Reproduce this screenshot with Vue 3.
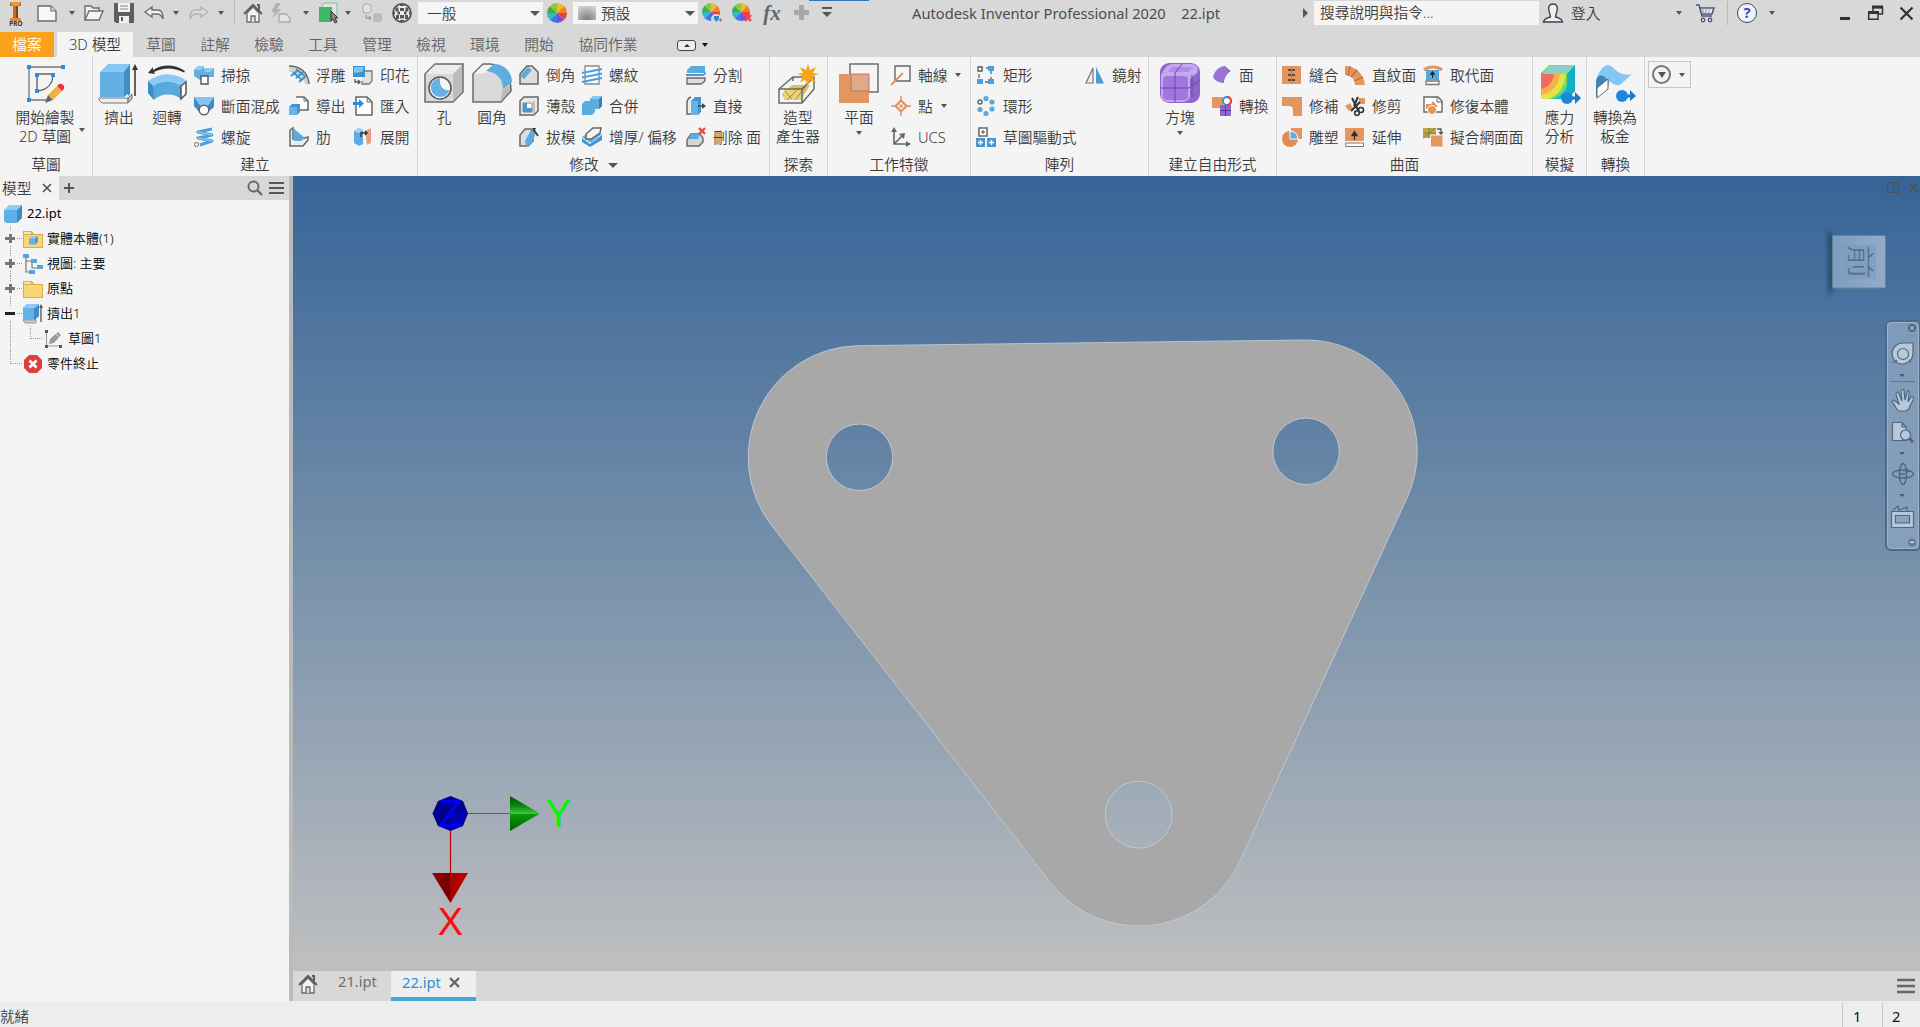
<script setup>
const G = '#6b6b6b'
const wheel = (cx, cy, r) => {
  const colors = ['#f7b733', '#f58220', '#ee3e3a', '#7a4be0', '#3f7be8', '#35b9c9', '#3fae49', '#8cc63f']
  return colors.map((c, i) => {
    const a = (i / 8) * Math.PI * 2 - Math.PI / 2
    const b = a + Math.PI / 4
    const p = (t) => `${(cx + r * Math.cos(t)).toFixed(2)} ${(cy + r * Math.sin(t)).toFixed(2)}`
    return `<path d="M${cx} ${cy}L${p(a)}A${r} ${r} 0 0 1 ${p(b)}Z" fill="${c}"/>`
  }).join('')
}
const cross = (x, y) => `<path d="M${x} ${y}l6 6m0-6l-6 6" stroke="#f04444" stroke-width="2.4" fill="none"/>`
const cube = `<path d="M1 6L6 1H19L14 6Z" fill="#8ecbf7"/><path d="M14 6L19 1V14L14 19Z" fill="#3f8cc4"/><path d="M1 6H14V19H3L1 17Z" fill="#5fb0e6"/>`

const icons = {
  logo: `<path d="M4 0H15V4H12V16H15V19H4V16H7V4H4Z" fill="#c96a1b"/><path d="M4 0H15L12 4H7Z" fill="#f0993c"/><path d="M10 4H12V16H15V19H10Z" fill="#8a4210"/><path d="M4 16H15V19H4Z" fill="#e38a31"/>`,
  new: `<path d="M1 3H14L19 8V18H1Z" fill="#f8f8f8" stroke="${G}" stroke-width="1.4"/><path d="M14 3V8H19" fill="#ddd" stroke="${G}" stroke-width="1.2"/>`,
  open: `<path d="M1 17V3H7L9 5H15V8" fill="#eee" stroke="${G}" stroke-width="1.4"/><path d="M1 17L5 8H19L15 17Z" fill="#f4f4f4" stroke="${G}" stroke-width="1.4"/>`,
  save: `<path d="M0 0H20V20H2L0 18Z" fill="#5e5e5e"/><path d="M4 0H16V9H4Z" fill="#f2f2f2"/><path d="M6 3H14M6 6H14" stroke="#888" stroke-width="1"/><path d="M5 13H15V20H5Z" fill="#eee"/><path d="M7 14H9V18H7Z" fill="#5e5e5e"/>`,
  undo: `<path d="M1 9L8 4V7H14C18 7 19 10 19 16C17 12 16 11 13 11H8V14Z" fill="#f1f1f1" stroke="${G}" stroke-width="1.3"/>`,
  redo: `<path d="M19 9L12 4V7H6C2 7 1 10 1 16C3 12 4 11 7 11H12V14Z" fill="#dedede" stroke="#b2b2b2" stroke-width="1.3"/>`,
  home: `<path d="M4 10V19H16V10L10 4Z" fill="#f4f4f4" stroke="${G}" stroke-width="1.3"/><path d="M1 11L10 2L19 11" fill="none" stroke="#5d5d5d" stroke-width="2"/><path d="M14 2H16V7" fill="none" stroke="#5d5d5d" stroke-width="2"/><path d="M8 19V13H12V19" fill="#ddd" stroke="${G}" stroke-width="1.3"/>`,
  flash: `<path d="M5 0L0 9H4L1 16L10 6H6L10 0Z" fill="#b0b0b0"/><path d="M8 11H15L19 15V19H8Z" fill="#e3e3e3" stroke="#aaa" stroke-width="1.3"/>`,
  select: `<path d="M4 2L6 0H19V14L17 16H4Z" fill="#e0e0e0" stroke="#79c794" stroke-width="1"/><path d="M1 4H14V19H1Z" fill="#3fb76a"/><path d="M13 8V18L15 16L17 20L19 19L17 15H20Z" fill="#888" stroke="#333" stroke-width="1"/>`,
  body: `<rect x="1" y="1" width="8" height="9" rx="3" fill="#e2e2e2" stroke="#a9a9a9"/><rect x="11" y="10" width="9" height="9" rx="3" fill="#bcbcbc"/><path d="M4 12V15H9M7 13l2 2-2 2" fill="none" stroke="#8a8a8a"/>`,
  ball: `<circle cx="10" cy="10" r="9" fill="#eee" stroke="#555" stroke-width="1.800"/><path d="M8 5h4v3h-4zM3.500 4.500h3v4h-3zM13.500 4.500h3v4h-3zM8 12h4v3.500H8zM4 12h3v4H4zM13 12h3v4h-3zM5.500 8.500h2.500v3H5.500zM12 8.500h2.500v3H12zM8 1h4v2H8zM8 17h4v2H8zM1 8.500h2v3H1zM17 8.500h2v3h-2z" fill="#555"/>`,
  wheel: wheel(10, 10, 10),
  wheelAdd: wheel(9, 9, 9) + `<circle cx="14" cy="16" r="5" fill="#d8d8d8"/><path d="M12 13H17V16L14.5 19L12 16Z" fill="#2d86d0"/><path d="M17 17H20M18.500 15.500V18.500" stroke="#777"/>`,
  wheelDel: wheel(9, 9, 9) + cross(13, 12),
  plus: `<path d="M7 2h5v5h5v5h-5v5H7v-5H2V7h5z" fill="#a7a7a7"/>`,
  custom: `<path d="M5 5H15" stroke="#555" stroke-width="2"/><path d="M5 9H15L10 14Z" fill="#555"/>`,
  user: `<path d="M10 1C14 1 15 4 14 8C13.500 11 12.500 12 12.500 14C17 15 19 16 19.500 19H.5C1 16 3 15 7.500 14C7.500 12 6.500 11 6 8C5 4 6 1 10 1Z" fill="#eef0f4" stroke="#3b4252" stroke-width="1.4"/>`,
  cart: `<path d="M1 2H4L7 13H17M5 5H19L17 11H6.500" fill="#e8ecf6" stroke="#4c5577" stroke-width="1.5"/><path d="M8 5V11M11 5V11M14 5V11" stroke="#8d95b5"/><circle cx="8" cy="17" r="1.700" fill="#fff" stroke="#4c5577" stroke-width="1.400"/><circle cx="15" cy="17" r="1.700" fill="#fff" stroke="#4c5577" stroke-width="1.400"/>`,
  // 3D model ribbon, large
  sketch: `<path d="M4 4H36M4 4V37H25" stroke="#777" stroke-width="1.300" fill="none"/><path d="M12 11H28M12 11V28M28 11C28 20 23 27 12 28" fill="none" stroke="#666" stroke-width="1.400"/><g fill="#2f8fdd"><path d="M2 2h4v4H2zM36 2h4v4h-4zM2 35h4v4H2zM11 10h3v4h-4v-4zM26 10h4v4h-4zM10 26h4v4h-4z"/></g><path d="M23 32L32 23L37 28L28 37Z" fill="#f0b040"/><path d="M32 23L34 21C38 20 41 24 38 27L37 28Z" fill="#e8323c"/><path d="M23 32L28 37L20 40Z" fill="#666"/>`,
  extrude: `<path d="M0 35H29V40H3L0 37Z" fill="#eee" stroke="#777"/><path d="M29 35L33 31V36L29 40Z" fill="#bbb" stroke="#777"/><path d="M1 9L9 1H31L29 9Z" fill="#88c7f5"/><path d="M29 9L31 1V31L29 33Z" fill="#3c86bd"/><path d="M1 9H25V34H1Z" fill="#64b0e4"/><path d="M25 9L31 1V29L25 34Z" fill="#418dc6"/><path d="M36 33V4" stroke="#333" stroke-width="1.500"/><path d="M33 7L36 1L39 7Z" fill="#333"/>`,
  revolve: `<path d="M1 10L6 4V7C16 1 27 1 38 8L37 9.500C26 4 16 4.500 7 9L8 11Z" fill="#333"/><path d="M1 18C13 9 28 9 40 18L34 23C26 17 15 17 6 23Z" fill="#8acaf6"/><path d="M6 23C15 17 26 17 34 23V36C26 30 15 30 7 37L1 30V18Z" fill="#59a9df"/><path d="M1 18L6 23L7 37L1 30Z" fill="#3e8cc4"/><path d="M34 23L39 19V31L34 36Z" fill="#fff" stroke="#555" stroke-width="1.500"/>`,
  hole: `<path d="M1 11L11 1H39V29L29 39H1Z" fill="#d9d9d9" stroke="${G}" stroke-width="1.500"/><path d="M2 11L11 2H38L29 11Z" fill="#ececec"/><path d="M29 11L38 2V29L29 38Z" fill="#bdbdbd"/><circle cx="16" cy="25" r="11" fill="#f6f6f6" stroke="#555" stroke-width="1.500"/><path d="M16 15A9.500 9.500 0 1 0 25.500 27C19 28 15 23 16 15Z" fill="#66b1e4"/>`,
  fillet: `<path d="M1 11L11 1H18C31 2 39 12 39 28L29 39H1Z" fill="#d9d9d9" stroke="${G}" stroke-width="1.500"/><path d="M2 11L11 2H24L14 10Z" fill="#f3f3f3"/><path d="M30 27L38 22V28L29 38Z" fill="#bbb"/><path d="M14 8L22 1C34 1 40 11 40 19L31 26C31 16 25 9 14 8Z" fill="#5facdf"/>`,
  shape: `<path d="M4 31L14 22L32 22L24 35H6Z" fill="#d9bf5c"/><path d="M6 26H25V37H6Z" fill="#e7d27d"/><path d="M9 37L20 26M17 37L27 24M7 28L14 36" stroke="#ab8c32" fill="none"/><path d="M1 26L15 14H36V26L24 40H1ZM1 26H24V40M24 26L36 14M15 14V18" fill="none" stroke="${G}" stroke-width="1.500"/><path d="M30 1L32 7L38 4L35 10L41 11L35 13L38 20L32 17L30 22L27 17L22 19L25 13L19 11L25 10L22 4L28 7Z" fill="#f7a516"/>`,
  plane: `<path d="M11 1H39V29H11Z" fill="#f4f4f4" stroke="${G}" stroke-width="1.500"/><path d="M0 11H30V40H0Z" fill="#e4965f"/><path d="M12 11H30V28H12Z" fill="#e0aa86" stroke="#a8714d" stroke-width=".8"/>`,
  box: `<rect x="0" y="0" width="40" height="40" rx="9" fill="#8d66c8"/><path d="M1 12C5 4 8 1 13 1H32C37 2 39 5 37 10L30 16V33C29 38 25 39 20 39H7C2 38 1 34 1 29Z" fill="#c5a9ef"/><rect x="3" y="13" width="25" height="24" rx="4" fill="#a176e0"/><path d="M8 9L12 4H33L29 9Z" fill="#b18be9"/><path d="M1 25H29L40 17M15 10V39M15 10L22 1M32 12V34" stroke="#6c46a5" fill="none"/>`,
  stress: `<path d="M1 11L10 2H35V28L27 36H1Z" fill="#16bcc8"/><path d="M1 36V10L9 2H35L29 9C29 24 23 33 12 36Z" fill="#72da70"/><path d="M1 36V10H26C25 24 18 33 8 36Z" fill="#e6e345"/><path d="M1 32V10H20C19 22 12 30 1 32Z" fill="#f8af45"/><path d="M1 26V10H14C14 18 8 25 1 26Z" fill="#ed6e61"/><path d="M10 2H35L27 11H3Z" fill="#8cd0c5"/><path d="M27 11L35 2V28L27 36Z" fill="#12b1bf"/><circle cx="27" cy="35" r="6" fill="#1d86df"/><path d="M32 33.500H35V29L41 35L35 41V36.500H32Z" fill="#1d79c8"/>`,
  sheet: `<path d="M1 35V19C2 10 8 3 12 2C19 1 22 15 37 11L25 22C20 24 13 17 11 15C6 18 4 27 4 33Z" fill="#86c6f2"/><path d="M1 35V20C1 14 5 9 11 15L14 18L13 24L1 35Z" fill="#3b85ba"/><path d="M2 25L13 16V26L2 35Z" fill="#fff" stroke="#666"/><circle cx="27" cy="33" r="6" fill="#1d86df"/><path d="M32 31.500H35V27L41 33L35 38V34.500H32Z" fill="#1d79c8"/>`,
  // 3D model ribbon, small
  sweep: `<path d="M0 5L4 1H10V4L13 3H20V12H10V14L6 15L0 11Z" fill="#63afe3"/><path d="M0 5L4 1H10L7 5ZM10 7L13 3H20L16 7Z" fill="#92cdf6"/><path d="M7 11H14V19H7Z" fill="#fff" stroke="#555" stroke-width="1.400"/>`,
  loft: `<path d="M0 1H20V11L13 17H6L0 10Z" fill="#3f8dc6"/><path d="M0 1H20L13 11H7Z" fill="#83c4f3"/><circle cx="10" cy="14" r="4.800" fill="#fff" stroke="#666" stroke-width="1.500"/>`,
  coil: `<path d="M18 2L4 5L18 8L4 11L18 14L6 18" fill="none" stroke="#4e9fd8" stroke-width="3" stroke-linejoin="round"/><path d="M4 5L18 8M4 11L18 14" stroke="#89c8f3" stroke-width="1.500"/><circle cx="2.500" cy="17.500" r="2" fill="#fff" stroke="#666"/>`,
  emboss: `<path d="M0 1C11 1 19 7 20 19H16C15 12 8 7 0 7Z" fill="#d4d4d4"/><path d="M0 1C11 1 19 7 20 19" fill="none" stroke="#666" stroke-width="1.500"/><path d="M2 11L8 6M7 13L14 7M10 17L16 12M4 7L13 15M7 4L17 12" stroke="#3e91cd" stroke-width="2"/>`,
  derive: `<path d="M7 1H15L19 5V14H11" fill="#fff" stroke="#666" stroke-width="1.500"/><path d="M15 1V5H19" fill="none" stroke="#666"/><path d="M0 11L3 8H11V16L8 19H0Z" fill="#4292cd"/><path d="M0 11H8V19H0Z" fill="#66b5ea"/>`,
  rib: `<path d="M1 3L4 1V12H12L19 10V13L14 19H1Z" fill="#ececec" stroke="#666" stroke-width="1.500"/><path d="M4 1L16 11L12 14L5 14Z" fill="#5baae0"/>`,
  decal: `<path d="M10 6H19V16L16 19H9V16" fill="#e0e0e0" stroke="#777" stroke-width="1.300"/><path d="M0 1H12V12H0Z" fill="#3d91d1"/><path d="M1 2H11L9 7L1 8Z" fill="#7fc5f2"/><path d="M2 14V17H7M5 15L7 17L5 19" fill="none" stroke="#555" stroke-width="1.300"/>`,
  import: `<path d="M3 1H14L19 6V19H3Z" fill="#fff" stroke="#666" stroke-width="1.500"/><path d="M14 1V6H19" fill="none" stroke="#666"/><path d="M0 6H6V3L11 7.500L6 12V9H0Z" fill="#2b8ee0"/>`,
  unwrap: `<path d="M1 4L6 1L10 3V17L6 19L1 16Z" fill="#5baae0"/><path d="M1 4L6 1L10 3L5 6Z" fill="#9bd2f6"/><path d="M12 4L18 1V16L14 18Z" fill="#e7a07b"/><path d="M8 10V6H14M12 4L14 6L12 8" fill="none" stroke="#333" stroke-width="1.400"/>`,
  chamfer: `<path d="M1 9L8 1H13L19 7V19H1Z" fill="#ddd" stroke="#666" stroke-width="1.500"/><path d="M1 11L9 2L13 5L5 14Z" fill="#5baae0"/>`,
  shell: `<path d="M1 5L5 1H19V15L15 19H1Z" fill="#e8e8e8" stroke="#666" stroke-width="1.500"/><path d="M4 7H13V16H4Z" fill="#fff" stroke="#888"/><path d="M4 7H8V12H13V16H4Z" fill="#4799d4"/><path d="M15 5V19" stroke="#999"/>`,
  draft: `<path d="M1 19V8L6 2H12L14 5V14L9 19Z" fill="#ddd" stroke="#666" stroke-width="1.500"/><path d="M6 14L12 3L17 6L12 18L7 19Z" fill="#5baae0"/><path d="M15 3L19 9" stroke="#333" stroke-width="1.600"/><path d="M13 1L17 1L15 5Z" fill="#333"/>`,
  thread: `<path d="M3 1H17V19H3Z" fill="#fff" stroke="#888" stroke-width="1.300"/><path d="M0 8L20 4M0 12.500L20 8.500M0 17L20 13" stroke="#4ba0dc" stroke-width="2"/>`,
  combine: `<path d="M0 8L3 5H8V3L11 0H20V10L17 13H13V16L10 19H0Z" fill="#5caae0"/><path d="M17 3L20 0V10L17 13Z" fill="#3982b9"/><path d="M8 3L11 0H20L17 3Z" fill="#8ac8f3"/>`,
  thicken: `<path d="M0 11L8 17L20 8V13L8 20L0 15Z" fill="#4495d0"/><path d="M0 10L9 4L20 7L9 16Z" fill="#65b1e6"/><path d="M4 7L11 1H19L18 6L9 12H4Z" fill="#f4f4f4" stroke="#666" stroke-width="1.500"/>`,
  split: `<path d="M1 5L5 1H19V8H1Z" fill="#5baae0"/><path d="M0 10H17L20 8" stroke="#4799d4" stroke-width="1.800" fill="none"/><path d="M1 13H19V16L15 19H1Z" fill="#ddd" stroke="#666" stroke-width="1.300"/>`,
  direct: `<path d="M5 1C2 2 1 4 1 7V18H6" fill="#eee" stroke="#666" stroke-width="1.500"/><path d="M5 5L9 1H15V16L12 19H5Z" fill="#4596d1"/><path d="M5 5H12V19H5Z" fill="#66b3e8"/><path d="M12 10H17" stroke="#444" stroke-width="1.400"/><path d="M16 7L20 10L16 13Z" fill="#444"/>`,
  delface: `<path d="M1 18V13L5 7H14L17 11V15L13 19H1Z" fill="#d5d5d5" stroke="#666" stroke-width="1.400"/><path d="M2 12L5 7H14L12 12Z" fill="#5baae0"/>` + cross(13, 1),
  axis: `<path d="M4 1H19V16H4Z" fill="#f7f7f7" stroke="#666" stroke-width="1.400"/><path d="M0 20L12 8" stroke="#e5905b" stroke-width="1.800"/>`,
  point: `<path d="M10 0V20M0 10H20" stroke="#e5905b" stroke-width="1.500"/><path d="M10 3L17 10L10 17L3 10Z" fill="#e5905b"/><path d="M10 6L14 10L10 14L6 10Z" fill="#f8f1ec"/><path d="M8.500 8.500h3v3h-3z" fill="#e5905b"/>`,
  ucs: `<path d="M3 3V17H17M3 17L12 8" fill="none" stroke="#666" stroke-width="1.600"/><path d="M0 5L3 0L6 5ZM15 14L20 17L15 20ZM8 7L14 6L13 12Z" fill="#666"/>`,
  rect: `<path d="M3 3H15V17H3Z" fill="none" stroke="#666" stroke-width="1.300" stroke-dasharray="4 3"/><g fill="#4d9fdb"><path d="M12 1h6v5h-6zM1 14h6v5H1zM12 14h6v5h-6z"/></g><path d="M2 2h4v4H2z" fill="#fff" stroke="#555" stroke-width="1.300"/>`,
  circ: `<g fill="#5ca9dc"><circle cx="10" cy="2.500" r="2.600"/><circle cx="16" cy="6" r="2.600"/><circle cx="16" cy="13" r="2.600"/><circle cx="10" cy="17.500" r="2.600"/><circle cx="4" cy="13.500" r="2.600"/></g><circle cx="4" cy="6" r="2" fill="#eee" stroke="#666" stroke-width="1.400"/>`,
  driven: `<path d="M3 1h8v8H3z" fill="#fff" stroke="#666" stroke-width="1.500"/><path d="M7 3v4M5 5h4" stroke="#555"/><path d="M0 11h9v9H0zM11 11h9v9h-9z" fill="#4799d4"/><path d="M4.500 13v5M2 15.500h5M15.500 13v5M13 15.500h5" stroke="#fff" stroke-width="1.300"/>`,
  mirror: `<path d="M8 3V18H1Z" fill="#eee" stroke="#777" stroke-width="1.200"/><path d="M11 2V18.500H19Z" fill="#4b9cd6"/>`,
  face: `<path d="M1 12C3 5 7 2 12 1L18 6C14 9 12 12 11 18C7 17 4 17 1 12Z" fill="#9a73d6"/><path d="M12 1L18 6C14 9 12 12 11 18" fill="none" stroke="#8058bd"/>`,
  convert: `<path d="M0 1H11V12H0Z" fill="#e4965f"/><path d="M8 9H19V20H8Z" fill="#9163d3"/><path d="M13.500 9V20M8 14.500H19" stroke="#5e3a97"/><circle cx="15" cy="5" r="4" fill="#fff" stroke="#2e96da" stroke-width="2"/><path d="M15 1A4 4 0 0 1 15 9" fill="none" stroke="#ed3b3b" stroke-width="2"/>`,
  stitch: `<path d="M0 1H9V19H0ZM10 1H19V19H10Z" fill="#e4965f"/><path d="M6 5H13M6 10H13M6 15H13" stroke="#333" stroke-width="1.400"/><path d="M9.500 1V19" stroke="#c97945"/>`,
  patch: `<path d="M0 1H20V20H11V14C11 11 9 10 7 10H0Z" fill="#e4965f"/>`,
  sculpt: `<path d="M9 1H20V12H9Z" fill="#e4965f"/><circle cx="8" cy="12" r="8" fill="#e08c55"/><path d="M8 4A8 8 0 0 1 16 12H8Z" fill="#5aaee2" stroke="#fff"/>`,
  ruled: `<path d="M0 1C11 1 19 9 20 20H10C10 14 7 11 0 10Z" fill="#e4965f"/><path d="M5 1L3 11M12 5L6 12M18 12L9 16" stroke="#b66b3d" stroke-width="1.200"/>`,
  trim: `<path d="M14 2h6v6h-6zM0 10l5-3 3 5-4 3z" fill="#e4965f"/><path d="M7 2L13 14M15 6L6 15M13 1L9 10" stroke="#333" stroke-width="2"/><circle cx="16" cy="14" r="2.500" fill="none" stroke="#333" stroke-width="1.600"/><circle cx="12" cy="17" r="2.300" fill="none" stroke="#333" stroke-width="1.600"/>`,
  extend: `<path d="M0 1H19V14H0Z" fill="#e4965f"/><path d="M9.500 13V7M7 8.500L9.500 4.500L12 8.500Z" stroke="#333" stroke-width="1.300" fill="#333"/><path d="M.700 16H18.500V19.500H.700Z" fill="#fff" stroke="#777"/>`,
  replace: `<path d="M1 5C6 1 14 1 19 5" fill="none" stroke="#e4965f" stroke-width="3"/><path d="M3 5H16V15H3Z" fill="#57a8df"/><path d="M9.500 13V9M7.500 9.500L9.500 6.500L11.500 9.500Z" stroke="#222" fill="#222"/><path d="M3 16H16V19.500H3Z" fill="#fff" stroke="#777" stroke-width="1.300"/>`,
  repair: `<path d="M1 1H15L19 5V16H1Z" fill="#fff" stroke="#666" stroke-width="1.400"/><path d="M3 8h6v5H3zM6 11L10 5L15 11Z" fill="#e4965f"/><path d="M14 1V6H19" fill="none" stroke="#666"/><circle cx="9" cy="14" r="4.500" fill="#e4965f" stroke="#fff"/>`,
  mesh: `<path d="M0 1H13V11H0Z" fill="#bca94e"/><path d="M0 6H13M6 1V11M0 11L6 6L12 1" stroke="#8e7c2c" fill="none"/><path d="M7.500 8H20V20H7.500Z" fill="#e4965f" stroke="#f5f5f5"/><path d="M14 2H18V7M16 5L18 7L20 5" stroke="#555" fill="none" stroke-width="1.300"/>`,
  // model browser
  part: cube,
  folder: `<path d="M0 2H9L11 5H20V19H0Z" fill="#dcae4a"/><path d="M1 6H19V18H1Z" fill="#f8d673"/><path d="M1 3H8V5H1Z" fill="#fbe6a0"/>`,
  view: `<path d="M3 2V18H7M3 7H8M9 8V14H14" fill="none" stroke="#777" stroke-width="1.200"/><path d="M0 0h6v4H0zM8 5h6v4H8zM14 11h6v4h-6zM6 16h6v4H6z" fill="#58a5da"/>`,
  feature: `<path d="M0 16H13V19H2Z" fill="#ccc" stroke="#999"/><path d="M0 4L4 0H16V12L12 16H0Z" fill="#3f8cc4"/><path d="M0 4H11V16H0Z" fill="#62b1e7"/><path d="M0 4L4 0H16L12 4Z" fill="#8ecbf7"/><path d="M18 18V3" stroke="#555" stroke-width="1.300"/><path d="M16 4L18 0L20 4Z" fill="#555"/>`,
  sketchItem: `<path d="M2.500 3V17H18" stroke="#999" fill="none"/><path d="M1 1h3v3H1zM1 16h3v3H1zM15 16h3v3h-3z" fill="#555"/><path d="M5 15L6 10L14 3L17 6L10 14Z" fill="#9a9a9a"/><path d="M12 5L15 8" stroke="#ddd"/>`,
  end: `<path d="M6 1H14L19 6V14L14 19H6L1 14V6Z" fill="#dd3f3c"/><path d="M6.500 6.500L13.500 13.500M13.500 6.500L6.500 13.500" stroke="#fff" stroke-width="2.800"/>`,
}
icons.folderBody = icons.folder + `<g transform="translate(5.500 6.500) scale(.48)">${cube}</g>`

const quick = [
  ['new', 34], ['caret', 16], ['open', 28], ['save', 32], ['undo', 28], ['caret', 16],
  ['redo', 30], ['caret', 14], ['sep', 12], ['home', 26], ['flash', 29], ['caret', 22],
  ['select', 21], ['caret', 20], ['body', 28], ['ball', 32],
]
const tabs = ['草圖', '註解', '檢驗', '工具', '管理', '檢視', '環境', '開始']

const big = (icon, lines, o = {}) => ({ icon, lines, w: 48, ...o })
const list = (w, items, o = {}) => ({ items, w, ...o })
const panels = [
  { title: '草圖', w: 93, pad: 0, cols: [big('sketch', ['開始繪製', '2D 草圖'], { w: 90, side: true })] },
  { title: '建立', w: 325, pad: 2, cols: [
    big('extrude', ['擠出']), big('revolve', ['迴轉'], { w: 51, start: true }),
    list(95, [['sweep', '掃掠'], ['loft', '斷面混成'], ['coil', '螺旋']]),
    list(64, [['emboss', '浮雕'], ['derive', '導出'], ['rib', '肋']]),
    list(64, [['decal', '印花'], ['import', '匯入'], ['unwrap', '展開']]),
  ] },
  { title: '修改', w: 352, pad: 2, more: true, cols: [
    big('hole', ['孔']), big('fillet', ['圓角'], { w: 51, start: true }),
    list(63, [['chamfer', '倒角'], ['shell', '薄殼'], ['draft', '拔模']]),
    list(104, [['thread', '螺紋'], ['combine', '合併'], ['thicken', '增厚/ 偏移']]),
    list(80, [['split', '分割'], ['direct', '直接'], ['delface', '刪除 面']]),
  ] },
  { title: '探索', w: 58, pad: 0, cols: [big('shape', ['造型', '產生器'], { w: 56 })] },
  { title: '工作特徵', w: 143, pad: 7, cols: [
    big('plane', ['平面'], { down: true, w: 56, start: true }),
    list(79, [['axis', '軸線', 1], ['point', '點', 1], ['ucs', 'UCS']]),
  ] },
  { title: '陣列', w: 178, pad: 5, cols: [
    list(109, [['rect', '矩形'], ['circ', '環形'], ['driven', '草圖驅動式']]),
    list(60, [['mirror', '鏡射']]),
  ] },
  { title: '建立自由形式', w: 128, pad: 7, cols: [
    big('box', ['方塊'], { down: true, w: 56, start: true }),
    list(60, [['face', '面'], ['convert', '轉換']]),
  ] },
  { title: '曲面', w: 256, pad: 5, cols: [
    list(63, [['stitch', '縫合'], ['patch', '修補'], ['sculpt', '雕塑']]),
    list(78, [['ruled', '直紋面'], ['trim', '修剪'], ['extend', '延伸']]),
    list(104, [['replace', '取代面'], ['repair', '修復本體'], ['mesh', '擬合網面面']]),
  ] },
  { title: '模擬', w: 54, pad: 0, cols: [big('stress', ['應力', '分析'], { w: 53 })] },
  { title: '轉換', w: 58, pad: 0, cols: [big('sheet', ['轉換為', '板金'], { w: 56 })] },
]

const tree = [
  { icon: 'folderBody', label: '實體本體(1)', sign: '+' },
  { icon: 'view', label: '視圖: 主要', sign: '+' },
  { icon: 'folder', label: '原點', sign: '+' },
  { icon: 'feature', label: '擠出1', sign: '-' },
  { icon: 'sketchItem', label: '草圖1', child: true },
  { icon: 'end', label: '零件終止', last: true },
]
</script>

<template>
  <div class="app">
    <header class="titlebar">
      <i class="accent"></i>
      <div class="brand">
        <svg width="20" height="19" viewBox="0 0 20 19" v-html="icons.logo"></svg>
        <b>PRO</b>
      </div>
      <span v-for="([name, w], i) in quick" :key="i" class="cell" :style="{ width: w + 'px' }">
        <i v-if="name === 'caret'" class="caret"></i>
        <i v-else-if="name === 'sep'" class="sep"></i>
        <svg v-else width="20" height="20" viewBox="0 0 20 20" v-html="icons[name]"></svg>
      </span>
      <div class="combo"><span>一般</span><i class="caret wide"></i></div>
      <span class="cell w28"><svg width="20" height="20" viewBox="0 0 20 20" v-html="icons.wheel"></svg></span>
      <div class="combo second"><i class="swatch"></i><span>預設</span><i class="caret wide"></i></div>
      <span class="cell w28"><svg width="20" height="20" viewBox="0 0 20 20" v-html="icons.wheelAdd"></svg></span>
      <span class="cell w32"><svg width="20" height="20" viewBox="0 0 20 20" v-html="icons.wheelDel"></svg></span>
      <span class="cell w28 fx">fx</span>
      <span class="cell w32"><svg width="20" height="20" viewBox="0 0 20 20" v-html="icons.plus"></svg></span>
      <span class="cell w18"><svg width="20" height="20" viewBox="0 0 20 20" v-html="icons.custom"></svg></span>
      <div class="caption"><span class="product">Autodesk Inventor Professional 2020</span><span>22.ipt</span></div>
      <span class="cell w18"><i class="caret-right"></i></span>
      <div class="search">搜尋說明與指令...</div>
      <span class="cell w28"><svg width="20" height="20" viewBox="0 0 20 20" v-html="icons.user"></svg></span>
      <div class="login">登入</div>
      <span class="cell w20"><i class="caret"></i></span>
      <span class="cell w32"><svg width="20" height="20" viewBox="0 0 20 20" v-html="icons.cart"></svg></span>
      <span class="cell w12"><i class="sep"></i></span>
      <span class="cell w28"><span class="help">?</span></span>
      <span class="cell w22"><i class="caret"></i></span>
      <svg class="winbtns" width="90" height="26" viewBox="0 0 90 26">
        <path d="M10 18.500H20" stroke="#333" stroke-width="3" />
        <path d="M43 11V7.500H52.500V14H48" fill="none" stroke="#333" stroke-width="1.500" /><path d="M42 7H53" stroke="#333" stroke-width="3" />
        <path d="M38.700 12H48V19.300H38.700Z" fill="none" stroke="#333" stroke-width="1.500" /><path d="M38 12.500H49" stroke="#333" stroke-width="3" />
        <path d="M70.500 7.500L82.500 19.500M82.500 7.500L70.500 19.500" stroke="#333" stroke-width="2.200" />
      </svg>
    </header>

    <nav class="tabs">
      <span class="file">檔案</span>
      <span class="active">3D 模型</span>
      <span v-for="t in tabs" :key="t" class="tab">{{ t }}</span>
      <span class="tab long">協同作業</span>
      <span class="toggle"><i class="caret up"></i></span>
      <i class="caret dark"></i>
    </nav>

    <section class="ribbon">
      <div v-for="p in panels" :key="p.title" class="panel" :style="{ width: p.w + 'px' }">
        <div class="cols" :style="{ paddingLeft: p.pad + 'px' }">
          <div v-for="(c, i) in p.cols" :key="i" :style="{ width: c.w + 'px' }" :class="c.icon ? 'bigcol' : 'listcol'">
            <template v-if="c.icon">
              <div class="big" :class="{ narrow: c.start }">
                <svg width="40" height="40" viewBox="0 0 40 40" v-html="icons[c.icon]"></svg>
                <span v-for="(l, k) in c.lines" :key="l" class="line" :class="{ first: k === 0 }">{{ l }}</span>
                <i v-if="c.down" class="caret below"></i>
              </div>
              <i v-if="c.side" class="caret side"></i>
            </template>
            <template v-else>
              <div v-for="([ic, label, menu]) in c.items" :key="label" class="row">
                <svg width="20" height="20" viewBox="0 0 20 20" v-html="icons[ic]"></svg>
                <span>{{ label }}</span><i v-if="menu" class="caret"></i>
              </div>
            </template>
          </div>
        </div>
        <div class="ptitle">{{ p.title }}<i v-if="p.more" class="caret wide"></i></div>
      </div>
      <div class="display"><span class="ring"><i class="caret wide"></i></span><i class="caret"></i></div>
    </section>

    <main class="main">
      <aside class="browser">
        <div class="bhead">
          <div class="btab"><span>模型</span>
            <svg width="10" height="10" viewBox="0 0 10 10"><path d="M1 1L9 9M9 1L1 9" stroke="#555" stroke-width="1.700" /></svg>
          </div>
          <svg class="add" width="12" height="12" viewBox="0 0 12 12"><path d="M6 1V11M1 6H11" stroke="#555" stroke-width="2" /></svg>
          <svg class="find" width="16" height="16" viewBox="0 0 16 16"><circle cx="6.500" cy="6.500" r="5" fill="none" stroke="#666" stroke-width="1.900" /><path d="M10 10L15 15" stroke="#666" stroke-width="2.200" /></svg>
          <svg width="15" height="14" viewBox="0 0 15 14"><path d="M0 2H15M0 7H15M0 12H15" stroke="#555" stroke-width="2" /></svg>
        </div>
        <div class="tree">
          <div class="node root"><svg width="20" height="20" viewBox="0 0 20 20" v-html="icons.part"></svg><span>22.ipt</span></div>
          <div v-for="n in tree" :key="n.label" class="node" :class="{ child: n.child, last: n.last }">
            <span class="gutter"><i v-if="n.sign" class="sign" :class="{ minus: n.sign === '-' }"></i></span>
            <i v-if="n.child" class="elbow"></i>
            <svg width="20" height="20" viewBox="0 0 20 20" v-html="icons[n.icon]"></svg>
            <span>{{ n.label }}</span>
          </div>
        </div>
      </aside>

      <div class="work">
        <div class="canvas">
          <svg class="scene" width="1627" height="795" viewBox="293 176 1627 795">
            <defs>
              <linearGradient id="gy" x1="0" y1="0" x2="0" y2="1"><stop offset="0" stop-color="#005a00" /><stop offset=".25" stop-color="#087c08" /><stop offset=".5" stop-color="#38c838" /><stop offset=".52" stop-color="#0a9a0a" /><stop offset="1" stop-color="#006000" /></linearGradient>
              <linearGradient id="rx"><stop offset="0" stop-color="#a00000" /><stop offset=".48" stop-color="#700000" /><stop offset=".52" stop-color="#a80000" /><stop offset="1" stop-color="#c40000" /></linearGradient>
              <linearGradient id="cubeface"><stop offset="0" stop-color="#7e9cc0" /><stop offset="1" stop-color="#93abc8" /></linearGradient>
              <filter id="soft" x="-3" y="-.2" width="7" height="1.400"><feGaussianBlur stdDeviation="2" /></filter>
            </defs>
            <path
              fill-rule="evenodd" fill="#a8a8a8" stroke="#c3cbd1" stroke-width=".9"
              d="M858 345.700L1304.500 340A111.500 111.500 0 0 1 1407.100 497.800L1239.800 861.200A111.300 111.300 0 0 1 1051 883.200L771.800 525.800A111.500 111.500 0 0 1 858 345.700Z
                 M826.300 457.300a33.200 33.200 0 1 0 66.400 0a33.200 33.200 0 1 0-66.400 0Z
                 M1272.900 451.300a33.200 33.200 0 1 0 66.400 0a33.200 33.200 0 1 0-66.400 0Z
                 M1105.300 814.700a33.400 33.400 0 1 0 66.800 0a33.400 33.400 0 1 0-66.800 0Z"
            />
            <path d="M468 813.500H511" stroke="#00a000" stroke-width="1.200" />
            <path d="M450.500 831V874" stroke="#c00000" stroke-width="1.200" />
            <path d="M510 796L540 813.500L510 831Z" fill="url(#gy)" />
            <path d="M432 873H468L450.500 903Z" fill="url(#rx)" />
            <path d="M450.500 796L463 801L468 813.500L463 826L450.500 831L438 826L432.500 813.500L438 801Z" fill="#00008c" />
            <path d="M450.500 813.500L467 811L462 825L450.500 830Z" fill="#0000b4" />
            <text x="450.500" y="826.500" class="axis" fill="#0000f0">Z</text>
            <text x="558.500" y="827" class="axis" fill="#00f500">Y</text>
            <text x="450.500" y="935" class="axis" fill="#ff0c0c">X</text>

            <path d="M1828 230L1833 236V289L1828 296Z" fill="#173c66" opacity=".75" filter="url(#soft)" />
            <path d="M1832.500 235.500H1885.500V288H1832.500Z" fill="url(#cubeface)" stroke="#6f7f8d" />
            <path d="M1842 245H1876V279H1842Z" fill="#7c9cbd" opacity=".7" />
            <g transform="translate(1859 262) rotate(90) scale(1 .8)"><text class="face" x="0" y="11.500" fill="#4f6d8e">前</text></g>

            <g fill="none" stroke="#4b5257" stroke-width="1.200"><path d="M1887.500 182.500H1898.500V192.500H1887.500ZM1893.500 182V192M1894 187.500H1898" /><path d="M1909 183L1918 192M1918 183L1909 192" stroke-width="1.600" /></g>
          </svg>

          <svg class="navbar" width="35" height="231" viewBox="0 0 35 231">
            <rect x="1" y="1" width="34" height="229" rx="5" fill="#8aa4c0" fill-opacity=".82" stroke="#4a6a8c" stroke-width="2" />
            <rect x="2.500" y="2.500" width="31" height="226" rx="4" fill="none" stroke="#9db4cb" />
            <circle cx="27" cy="8" r="4" fill="#50667d" /><path d="M25 6l4 4m0-4l-4 4" stroke="#c7d4e0" />
            <g fill="#b7c8da" stroke="#52677f" stroke-width="1.200">
              <path d="M18 23H28V34A10.500 10.500 0 1 1 18 23Z" /><circle cx="18" cy="34" r="5.500" /><path d="M12 40L8 43M24 40L26 42" />
              <path d="M13 91L8 83C6 81 8 79 10 81L14 84L11 74C11 72 13 71 14 74L17 81L16 71C17 69 19 69 19 71L20 80L22 72C23 70 25 71 24 73L23 82L26 77C28 76 29 77 28 80L25 86C24 89 23 91 20 91Z" />
              <path d="M7.500 102.500H17L21 107V120.500H7.500ZM17 102.500V107H21" /><path d="M23 117L28 122" stroke-width="3" /><circle cx="20.500" cy="115" r="5" />
              <path d="M6.500 191.500H28.500V207.500H6.500Z" /><path d="M10.500 195.500H24.500V203H10.500Z" fill="#8ba5bf" /><path d="M8 190L13 186L14 190L22 187V191" fill="none" />
            </g>
            <g fill="none" stroke="#52677f" stroke-width="1.300"><ellipse cx="18" cy="154" rx="10.500" ry="4" /><ellipse cx="18" cy="154" rx="3.500" ry="10.500" /><path d="M15 154h5M22 148v5M20 151h5" /></g>
            <path d="M14 54h6l-3 3zM14 132h6l-3 3zM14 174h6l-3 3z" fill="#465d76" />
            <path d="M5 61.500H30" stroke="#5e7690" />
            <circle cx="27" cy="222.500" r="4" fill="#667b90" /><path d="M25 221.500h4v1.500h-4z" fill="#c7d4e0" />
          </svg>
        </div>
        <div class="doctabs">
          <svg class="dhome" width="20" height="20" viewBox="0 0 20 20" v-html="icons.home"></svg>
          <span class="doc">21.ipt</span>
          <span class="doc current">22.ipt
            <svg width="11" height="11" viewBox="0 0 11 11"><path d="M1 1L10 10M10 1L1 10" stroke="#666" stroke-width="2.400" /></svg>
          </span>
          <svg class="dmenu" width="18" height="16" viewBox="0 0 18 16"><path d="M0 2H18M0 8H18M0 14H18" stroke="#666" stroke-width="2.300" /></svg>
        </div>
      </div>
    </main>

    <footer class="status"><span class="ready">就緒</span><span class="num">1</span><span class="num two">2</span></footer>
  </div>
</template>

<style>
body { margin: 0; overflow: hidden; }
</style>

<style scoped>
.app { width: 1920px; height: 1027px; display: flex; flex-direction: column; overflow: hidden; background: #d8d8d8; color: #3c3c3c; font: 350 14.7px/19px "Noto Sans", "Noto Sans CJK TC", sans-serif; white-space: nowrap; }
svg { display: block; flex: none; overflow: visible; }
.caret { display: block; flex: none; width: 0; height: 0; border: solid transparent; border-width: 4px 3px 0; border-top-color: #555; }
.caret.wide { border-width: 5px 5px 0; border-top-color: #555; }
.caret.dark { border-top-color: #111; }

.titlebar { position: relative; height: 26px; padding: 0 0 6px 2px; display: flex; align-items: center; flex: none; }
.accent { position: absolute; left: 809px; top: 0; width: 60px; height: 1px; background: #2e75b6; }
.brand { width: 28px; display: flex; flex-direction: column; align-items: center; padding-top: 2px; }
.brand b { font: 700 6.500px/6px "Noto Sans", sans-serif; color: #333; }
.cell { height: 26px; display: flex; align-items: center; justify-content: center; flex: none; }
.w12 { width: 12px; } .w18 { width: 18px; } .w20 { width: 20px; } .w22 { width: 22px; } .w28 { width: 28px; } .w32 { width: 32px; }
.sep { width: 1px; height: 24px; background: #b9b9b9; }
.combo { box-sizing: border-box; width: 125px; height: 22px; flex: none; background: #f5f5f5; display: flex; align-items: center; padding: 0 3px 0 9px; }
.combo .caret { margin-left: auto; }
.combo.second { margin-left: 2px; padding-left: 5px; }
.swatch { width: 18px; height: 14px; margin-right: 5px; background: radial-gradient(circle at 50% 100%, #777, #d4d4d4 90%); }
.fx { font: italic 700 21px/22px "Liberation Serif", serif; color: #666; }
.caption { width: 308px; flex: none; margin-left: 76px; padding-right: 76px; display: flex; font-weight: 400; color: #4c4c4c; }
.product { width: 273px; }
.caret-right { border: solid transparent; border-width: 5px 0 5px 5px; border-left-color: #555; }
.search { box-sizing: border-box; width: 225px; height: 24px; padding: 2px 0 0 6px; background: #f4f4f4; flex: none; }
.login { width: 98px; padding-left: 4px; flex: none; }
.help { box-sizing: border-box; width: 20px; height: 20px; border: 1.500px solid #3d465c; border-radius: 50%; background: #f2f4fa; color: #2d55b8; font: 700 15px/17px "Noto Sans", sans-serif; text-align: center; }
.winbtns { margin-left: 47px; }

.tabs { height: 25px; flex: none; display: flex; align-items: center; color: #626262; }
.tabs > span { text-align: center; line-height: 25px; }
.tabs > .file { width: 54px; height: 25px; background: #faa21b; color: #fff; }
.tabs > .active { width: 76px; height: 25px; margin: 0 1px 0 3px; background: #f4f4f4; color: #3c3c3c; }
.tab { width: 54px; }
.tab.long { width: 84px; }
.tabs > .toggle { box-sizing: border-box; width: 19px; height: 11px; margin: 1px 6px 0 27px; border: 1.500px solid #444; border-radius: 3px; background: #eee; display: flex; align-items: center; justify-content: center; }
.caret.up { border-width: 0 3px 3px; border-color: transparent; border-bottom-color: #333; }

.ribbon { height: 119px; flex: none; display: flex; background: #f4f4f4; }
.panel { box-sizing: border-box; flex: none; border-right: 1px solid #d2d2d2; display: flex; flex-direction: column; }
.cols { height: 98px; display: flex; }
.bigcol { position: relative; flex: none; }
.listcol { flex: none; padding-top: 3px; display: flex; flex-direction: column; gap: 1px; }
.big { display: flex; flex-direction: column; align-items: center; padding-top: 6px; }
.big.narrow { width: 48px; }
.line.first { margin-top: 5px; }
.caret.below { margin-top: 4px; }
.caret.side { position: absolute; right: 5px; top: 71px; }
.row { height: 30px; display: flex; align-items: center; }
.row span { margin-left: 7px; }
.row .caret { margin-left: 8px; }
.ptitle { height: 18px; display: flex; align-items: center; justify-content: center; }
.ptitle .caret { margin: 2px 0 0 9px; }
.display { box-sizing: border-box; width: 43px; height: 27px; margin: 4px 0 0 3px; border: 1px solid #c6c6c6; display: flex; align-items: center; gap: 8px; padding-left: 3px; }
.ring { box-sizing: border-box; width: 19px; height: 19px; border: 2px solid #777; border-radius: 50%; display: flex; align-items: center; justify-content: center; }
.ring .caret { border-width: 6px 4px 0; }

.main { height: 825px; flex: none; display: flex; }
.browser { width: 289px; flex: none; background: #f4f4f4; border-right: 4px solid #b9bbbb; }
.bhead { height: 24px; background: #d8d8d8; display: flex; align-items: center; }
.btab { box-sizing: border-box; width: 59px; height: 24px; padding-left: 2px; background: #f4f4f4; display: flex; align-items: center; gap: 11px; }
.add { margin-left: 4px; }
.find { margin: 0 6px 0 auto; }
.bhead > svg:last-child { margin-right: 5px; }
.tree { padding-top: 1px; color: #000; font-size: 13px; }
.node { height: 25px; display: flex; align-items: center; }
.root { padding-left: 3px; font-weight: 400; }
.root span { margin-left: 4px; }
.gutter { position: relative; width: 23px; height: 25px; flex: none; background: linear-gradient(90deg, #999 50%, transparent 0) 11px 12px / 2px 1px repeat-x, linear-gradient(#999 50%, transparent 0) 10px 0 / 1px 2px repeat-y; }
.child .gutter { width: 30px; background: linear-gradient(#999 50%, transparent 0) 10px 0 / 1px 2px repeat-y; }
.gutter::before { content: ""; position: absolute; left: 0; top: 0; width: 10px; height: 25px; background: #f4f4f4; }
.last .gutter { clip-path: inset(0 0 12px 0); }
.elbow { width: 11px; height: 12px; margin: -12px 2px 0 0; border: dotted #999; border-width: 0 0 1px 1px; }
.sign { position: absolute; left: 3px; top: 6px; width: 14px; height: 13px; background: linear-gradient(#777, #777) 2px 5px / 10px 3px no-repeat, linear-gradient(#777, #777) 5.500px 2px / 3px 9px no-repeat, #f4f4f4; }
.sign.minus { background: linear-gradient(#222, #222) 2px 5px / 10px 3px no-repeat, #f4f4f4; }
.node:not(.root) > span:last-child { margin-left: 4px; }

.work { width: 1627px; display: flex; flex-direction: column; }
.canvas { position: relative; height: 795px; background: linear-gradient(#366497, #4e749f 18%, #7690aa 48%, #9ba8b6 75%, #bfbfbf); }
.axis { font: 400 38px "Liberation Sans", sans-serif; text-anchor: middle; }
.face { font: 300 34px "Noto Sans CJK TC", sans-serif; text-anchor: middle; }
.navbar { position: absolute; right: 0; top: 144px; }
.doctabs { height: 30px; display: flex; align-items: center; background: #d8d8d8; }
.dhome { margin: -5px 0 0 5px; }
.doc { box-sizing: border-box; height: 30px; padding: 0 0 0 20px; line-height: 21px; width: 73px; color: #707070; font-weight: 400; }
.doc.current { width: 85px; padding: 0 0 3px 11px; background: #efefef; border-bottom: 4px solid #45a7d6; color: #2b8fd0; display: flex; align-items: center; gap: 8px; }
.dmenu { margin: 0 5px 0 auto; }

.status { height: 26px; display: flex; background: #ededed; line-height: 30px; }
.ready { flex: 1; font-size: 14.500px; }
.num { box-sizing: border-box; width: 40px; margin-top: 2px; line-height: 26px; padding-left: 10px; border-left: 1px solid #c9c9c9; color: #111; font-weight: 400; }
.num.two { width: 38px; padding-left: 9px; }
</style>
